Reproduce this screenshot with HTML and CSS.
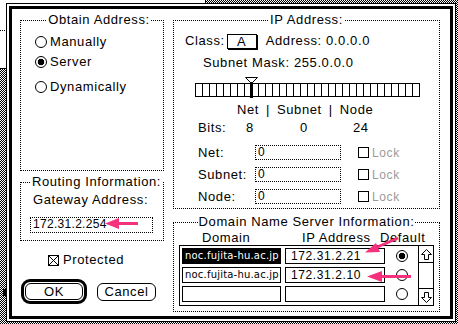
FILE: index.html
```html
<!DOCTYPE html>
<html lang="en">
<head>
    <meta charset="UTF-8">
    <title>MacTCP</title>
    <link rel="stylesheet" href="styles.css">
</head>
<body>

    <div class="desk-window"><div class="desk-rule"></div></div>
    <div class="desk-thumb"></div>

    <div class="dialog">
        <div class="dialog-frame">

            <div class="col">
                <fieldset class="group obtain">
                    <legend>Obtain Address:</legend>
                    <div class="radio-row"><span class="radio"></span>Manually</div>
                    <div class="radio-row server"><span class="radio on"></span>Server</div>
                    <div class="radio-row dyn"><span class="radio"></span>Dynamically</div>
                </fieldset>

                <fieldset class="group routing">
                    <legend>Routing Information:</legend>
                    <div class="gw-label">Gateway Address:</div>
                    <div class="field gw-field">172.31.2.254</div>
                </fieldset>

                <div class="check-row protected"><span class="check x"></span>Protected</div>

                <div class="buttons">
                    <div class="btn-default"><div class="btn ok">OK</div></div>
                    <div class="btn cancel">Cancel</div>
                </div>
            </div>

            <div class="col">
                <fieldset class="group ip">
                    <legend>IP Address:</legend>
                    <div class="class-row">
                        <span>Class:</span>
                        <span class="popup">A</span>
                        <span class="address">Address: 0.0.0.0</span>
                    </div>
                    <div class="mask-row">Subnet Mask: 255.0.0.0</div>
                    <div class="bitbar-wrap">
                        <div class="bitbar"></div>
                        <svg class="thumb" width="13" height="21" viewBox="0 0 13 21">
                            <path d="M0.5 0.5 H12.5 L7.5 5.5 H5.5 Z" fill="#fff" stroke="#000"/>
                            <rect x="5" y="5" width="3" height="16" fill="#000"/>
                        </svg>
                    </div>
                    <div class="nsn-row"><span>Net</span><span>|</span><span>Subnet</span><span>|</span><span>Node</span></div>
                    <div class="bits-row">
                        <span class="b-label">Bits:</span>
                        <span class="b-net">8</span>
                        <span class="b-sub">0</span>
                        <span>24</span>
                    </div>
                    <div class="ip-row first">
                        <span class="ip-label">Net:</span>
                        <span class="field ip-field">0</span>
                        <span class="check"></span>
                        <span class="lock">Lock</span>
                    </div>
                    <div class="ip-row">
                        <span class="ip-label">Subnet:</span>
                        <span class="field ip-field">0</span>
                        <span class="check"></span>
                        <span class="lock">Lock</span>
                    </div>
                    <div class="ip-row">
                        <span class="ip-label">Node:</span>
                        <span class="field ip-field">0</span>
                        <span class="check"></span>
                        <span class="lock">Lock</span>
                    </div>
                </fieldset>

                <fieldset class="group dns">
                    <legend>Domain Name Server Information:</legend>
                    <div class="dns-head">
                        <span class="h-domain">Domain</span>
                        <span class="h-ip">IP Address</span>
                        <span>Default</span>
                    </div>
                    <div class="dns-table">
                        <div class="dns-rows">
                            <div class="dns-row">
                                <span class="dcell sel">noc.fujita-hu.ac.jp</span>
                                <span class="icell">172.31.2.21</span>
                                <span class="rcell"><span class="radio on"></span></span>
                            </div>
                            <div class="dns-row">
                                <span class="dcell">noc.fujita-hu.ac.jp</span>
                                <span class="icell">172.31.2.10</span>
                                <span class="rcell"><span class="radio"></span></span>
                            </div>
                            <div class="dns-row">
                                <span class="dcell"></span>
                                <span class="icell"></span>
                                <span class="rcell"><span class="radio"></span></span>
                            </div>
                        </div>
                        <div class="scroll">
                            <div class="arrow up">
                                <svg width="13" height="13" viewBox="0 0 13 13"><path d="M6.5 1.5 L11.5 6.5 H8.5 V11.5 H4.5 V6.5 H1.5 Z" fill="none" stroke="#000"/></svg>
                            </div>
                            <div class="arrow down">
                                <svg width="13" height="13" viewBox="0 0 13 13"><path d="M6.5 11.5 L11.5 6.5 H8.5 V1.5 H4.5 V6.5 H1.5 Z" fill="none" stroke="#000"/></svg>
                            </div>
                        </div>
                    </div>
                </fieldset>
            </div>

        </div>
    </div>

    <!-- pink annotation arrows drawn over the dialog -->
    <svg class="annot" width="458" height="324" viewBox="0 0 458 324">
        <g fill="#f5307c" stroke="#f5307c">
            <line x1="138" y1="223.5" x2="114" y2="223.5" stroke-width="3"/>
            <path d="M105 223.5 L119 218 L119 229 Z" stroke="none"/>
            <line x1="398" y1="238" x2="374" y2="248.5" stroke-width="3"/>
            <path d="M365 252.5 L376 243 L380 252 Z" stroke="none"/>
            <line x1="411" y1="276.5" x2="376" y2="276.5" stroke-width="3"/>
            <path d="M367 276.5 L382 271 L382 282 Z" stroke="none"/>
        </g>
    </svg>

</body>
</html>
```

FILE: styles.css
```css
* {
    box-sizing: border-box;
}
body {
    margin: 0;
    width: 458px;
    height: 324px;
    overflow: hidden;
    position: relative;
    background: repeating-conic-gradient(#000 0 25%, #fff 0 50%) 0 0 / 2px 2px;
    font-family: "Liberation Sans", Arial, sans-serif;
    font-size: 13px;
    line-height: 14px;
    letter-spacing: 0.6px;
    color: #000;
}

/* bits of the window behind */
.desk-window {
    position: absolute;
    left: 0;
    top: 0;
    width: 206px;
    height: 69px;
    background: #fff;
    border-right: 1px solid #000;
    border-bottom: 1px solid #000;
}
.desk-rule {
    margin-top: 30px;
    border-top: 1px dotted #000;
}
.desk-thumb {
    position: absolute;
    left: 3px;
    top: 289px;
    width: 4px;
    height: 7px;
    background: #000;
}

/* dialog frame */
.dialog {
    position: absolute;
    left: 6px;
    top: 3px;
    width: 450px;
    height: 319px;
    border: 1px solid #000;
    padding: 2px;
    background: #fff;
}
.dialog-frame {
    height: 100%;
    border: 3px solid #000;
    display: grid;
    grid-template-columns: 144px 267px;
    column-gap: 9px;
    align-items: start;
    padding: 4px 0 0 8px;
}
.col {
    display: flex;
    flex-direction: column;
}

.group {
    margin: 0;
    padding: 0;
    border: 1px dotted #000;
    min-width: 0;
}
.group legend {
    margin: 0 auto;
    padding: 0 1px;
    line-height: 14px;
}

/* radios and checks */
.radio {
    display: inline-block;
    width: 12px;
    height: 12px;
    border: 1px solid #000;
    border-radius: 50%;
    background: #fff;
    flex: none;
}
.radio.on {
    background: radial-gradient(circle, #000 0 3px, #fff 3.6px);
}
.check {
    display: inline-block;
    width: 11px;
    height: 11px;
    border: 1px solid #000;
    flex: none;
}
.check.x {
    background:
        linear-gradient(45deg, transparent calc(50% - 0.6px), #000 calc(50% - 0.6px) calc(50% + 0.6px), transparent calc(50% + 0.6px)),
        linear-gradient(-45deg, transparent calc(50% - 0.6px), #000 calc(50% - 0.6px) calc(50% + 0.6px), transparent calc(50% + 0.6px));
}

.obtain {
    height: 158px;
    padding: 8px 0 0 14px;
}
.radio-row {
    display: flex;
    align-items: center;
    gap: 3px;
    height: 14px;
}
.radio-row.server {
    margin-top: 6px;
}
.radio-row.dyn {
    margin-top: 11px;
}

.routing {
    margin-top: 4px;
    height: 66px;
    padding: 4px 0 0 9px;
}
.gw-label {
    padding-left: 3px;
}
.field {
    border: 1px dotted #000;
    font-size: 12px;
    line-height: 13px;
    padding-left: 2px;
}
.gw-field {
    margin-top: 10px;
    width: 123px;
    height: 16px;
    letter-spacing: 0.3px;
}

.check-row {
    display: flex;
    align-items: center;
    gap: 4px;
    height: 14px;
}
.protected {
    margin-top: 12px;
    padding-left: 28px;
}

.buttons {
    margin-top: 12px;
    padding-left: 1px;
    display: flex;
    align-items: center;
    gap: 10px;
}
.btn-default {
    border: 3px solid #000;
    border-radius: 9px;
    padding: 1px;
}
.btn {
    border: 1px solid #000;
    border-radius: 6px;
    height: 17px;
    display: flex;
    align-items: center;
    justify-content: center;
}
.btn.ok {
    width: 58px;
}
.btn.cancel {
    width: 59px;
    height: 18px;
}

/* IP address group */
.ip {
    height: 196px;
}
.class-row {
    margin-top: 6px;
    padding-left: 11px;
    height: 16px;
    display: flex;
    align-items: center;
}
.popup {
    margin-left: 2px;
    width: 30px;
    height: 15px;
    border: 1px solid #000;
    box-shadow: 1px 1px 0 #000;
    text-align: center;
    line-height: 13px;
}
.address {
    margin-left: 9px;
}
.mask-row {
    margin-top: 7px;
    padding-left: 29px;
}
.bitbar-wrap {
    position: relative;
    margin: 7px 0 0 21px;
    width: 225px;
    height: 20px;
    padding-top: 6px;
}
.bitbar {
    height: 14px;
    border: 1px solid #000;
    background: repeating-linear-gradient(90deg, transparent 0 6px, #000 6px 7px);
}
.thumb {
    position: absolute;
    left: 50px;
    top: 0;
}
.nsn-row {
    margin-top: 6px;
    padding-left: 63px;
    display: flex;
    gap: 7px;
}
.bits-row {
    margin-top: 4px;
    padding-left: 24px;
    display: flex;
}
.b-label {
    width: 48px;
}
.b-net {
    width: 54px;
}
.b-sub {
    width: 53px;
}
.ip-row {
    margin-top: 7px;
    padding-left: 24px;
    height: 15px;
    display: flex;
    align-items: center;
}
.ip-row.first {
    margin-top: 10px;
}
.ip-label {
    width: 57px;
}
.ip-field {
    width: 86px;
    height: 15px;
}
.ip-row .check {
    margin-left: 17px;
}
.lock {
    margin-left: 3px;
    color: #9a9a9a;
    font-size: 12px;
}

/* name server group */
.dns {
    margin-top: 6px;
    height: 97px;
}
.dns-head {
    margin-top: 2px;
    padding-left: 28px;
    display: flex;
}
.h-domain {
    width: 100px;
}
.h-ip {
    width: 78px;
}
.dns-table {
    margin-left: 5px;
    width: 255px;
    height: 61px;
    border: 1px solid #000;
    display: flex;
}
.dns-rows {
    flex: 1;
    padding: 2px 0 0 2px;
    display: flex;
    flex-direction: column;
    gap: 3px;
}
.dns-row {
    display: flex;
    align-items: center;
    height: 16px;
}
.dcell {
    width: 99px;
    height: 16px;
    border: 1px solid #000;
    padding-left: 2px;
    font-family: "DejaVu Sans", sans-serif;
    font-size: 10px;
    line-height: 14px;
    letter-spacing: 0.2px;
    white-space: nowrap;
    overflow: hidden;
}
.dcell.sel {
    background: #000;
    color: #fff;
}
.icell {
    margin-left: 4px;
    width: 100px;
    height: 16px;
    border: 1px solid #000;
    padding-left: 5px;
    font-size: 12px;
    line-height: 14px;
    letter-spacing: 0.6px;
}
.rcell {
    flex: 1;
    display: flex;
    justify-content: center;
}
.scroll {
    width: 15px;
    border-left: 1px solid #000;
    display: flex;
    flex-direction: column;
    justify-content: space-between;
}
.arrow {
    height: 17px;
    display: flex;
    align-items: center;
    justify-content: center;
}
.arrow.up {
    border-bottom: 1px solid #000;
}
.arrow.down {
    border-top: 1px solid #000;
}

.annot {
    position: absolute;
    left: 0;
    top: 0;
    pointer-events: none;
}
```
